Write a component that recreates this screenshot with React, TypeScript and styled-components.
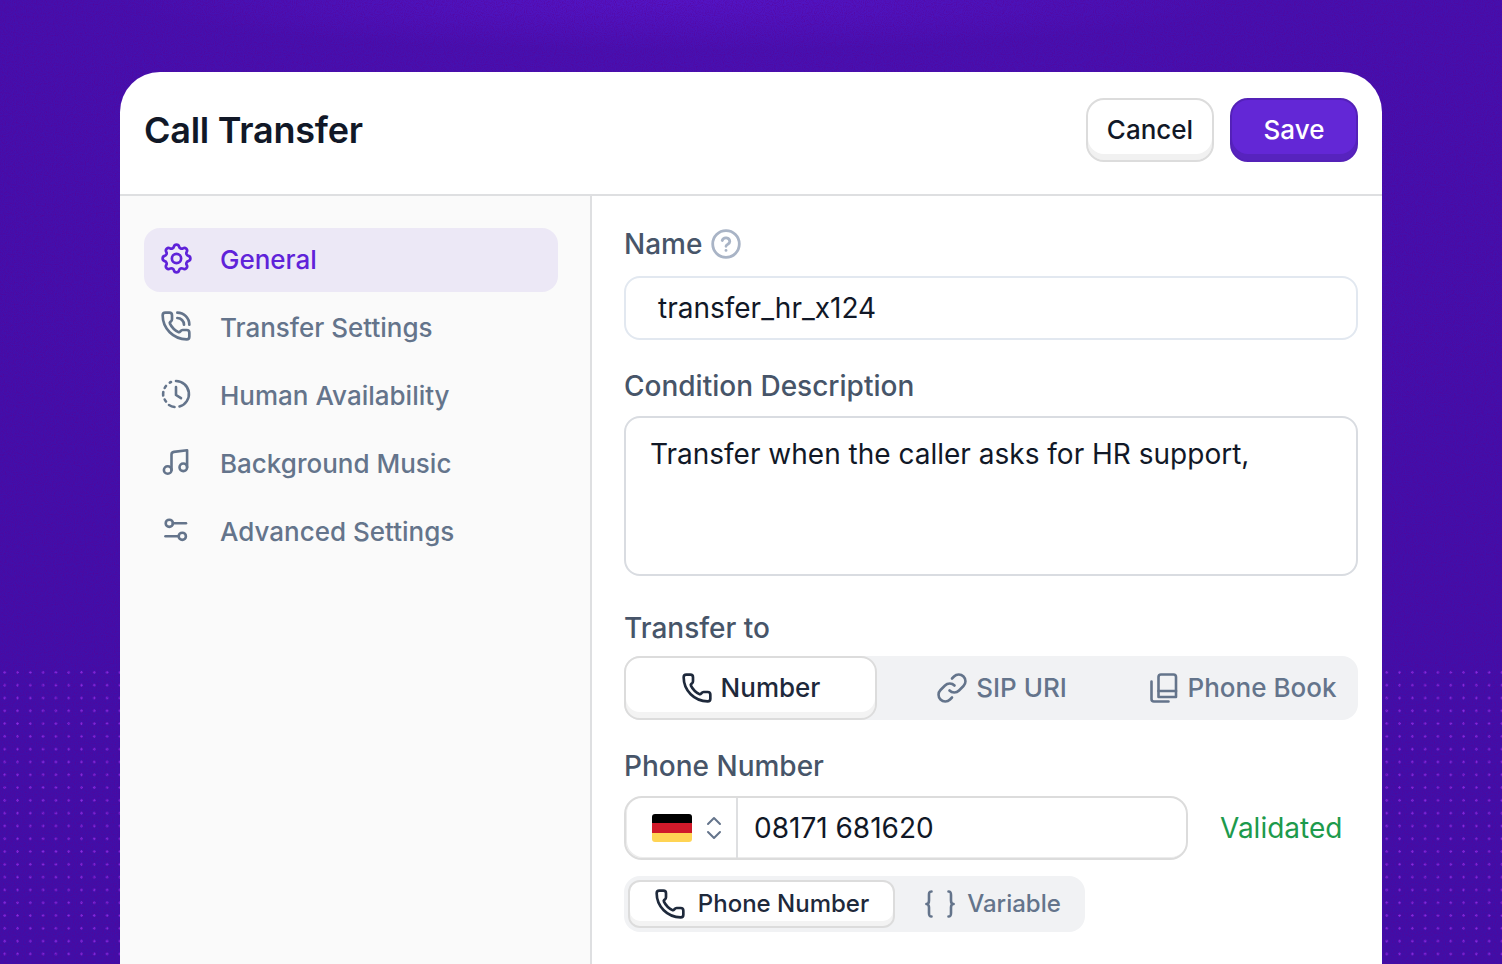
import { FC, ReactNode } from "react";
import styled, { createGlobalStyle } from "styled-components";
import { Phone, PhoneCall } from "lucide-react";
import { TbSettings } from "react-icons/tb";

const GlobalStyle = createGlobalStyle`
  html, body {
    margin: 0;
    padding: 0;
    overflow: hidden;
  }
  * {
    box-sizing: border-box;
  }
  body {
    font-family: "Inter", "Liberation Sans", sans-serif;
  }
`;

const ClockDashed = () => (
  <svg width="32" height="32" viewBox="0 0 32 32" fill="none" stroke="currentColor" strokeWidth="2.6" strokeLinecap="round" strokeLinejoin="round">
    <path d="M16 3a13 13 0 0 1 3.500 25.500" />
    <path d="M14.500 29a13 13 0 0 1-5.500-2" />
    <path d="M6 23.500a13 13 0 0 1-1.300-2" />
    <path d="M3.200 17.500a13 13 0 0 1 .1-3.500" />
    <path d="M4.700 10a13 13 0 0 1 1.300-2" />
    <path d="M9.800 4.600a13 13 0 0 1 1.200-.6" />
    <path d="M16 9v8l5 3.200" />
  </svg>
);

const Music = () => (
  <svg width="32" height="32" viewBox="0 0 32 32" fill="none" stroke="currentColor" strokeWidth="2.6" strokeLinecap="round" strokeLinejoin="round">
    <circle cx="7.700" cy="24" r="3.800" />
    <circle cx="23.300" cy="21.300" r="3.800" />
    <path d="M11.500 24V8.500c0-1.500.8-2.400 2.400-2.600L27.100 4.200v17" />
  </svg>
);

const Sliders = () => (
  <svg width="32" height="32" viewBox="0 0 32 32" fill="none" stroke="currentColor" strokeWidth="2.600" strokeLinecap="round" strokeLinejoin="round">
    <circle cx="9.300" cy="9.300" r="3.600" />
    <path d="M13 9.300h13" />
    <circle cx="22.300" cy="22.300" r="3.600" />
    <path d="M5.500 22.300h13" />
  </svg>
);

const PhoneBook = () => (
  <svg width="32" height="32" viewBox="0 0 32 32" fill="none" stroke="currentColor" strokeWidth="2.600" strokeLinecap="round" strokeLinejoin="round">
    <path d="M3.500 9.500v17.500a2.500 2.500 0 0 0 2.500 2.500h14.500" />
    <path d="M10.500 25V5a2.500 2.500 0 0 1 2.500-2.500h12.500A2.500 2.500 0 0 1 28 5v20Z" />
    <path d="M10.500 19h17.500" />
  </svg>
);

const Braces = () => (
  <svg width="30" height="32" viewBox="0 0 30 32" fill="none" stroke="currentColor" strokeWidth="2.600" strokeLinecap="round" strokeLinejoin="round">
    <path d="M6.500 3.500C4 3.500 4 5 4 7v5.500c0 2-1 3.500-2.600 3.500C3 16 4 17.500 4 19.500V25c0 2 0 3.500 2.500 3.500" />
    <path d="M23.500 3.500C26 3.500 26 5 26 7v5.500c0 2 1 3.500 2.600 3.500-1.600 0-2.600 1.500-2.600 3.500V25c0 2 0 3.500-2.500 3.500" />
  </svg>
);

const HelpIcon = () => (
  <svg width="30" height="30" viewBox="0 0 30 30" fill="none" stroke="currentColor" strokeWidth="2.800" strokeLinecap="round" strokeLinejoin="round">
    <circle cx="15" cy="15" r="13.300" />
    <path d="M11.200 11.500a3.900 3.900 0 0 1 7.600 1c0 2.600-3.800 3-3.800 4.800" />
    <path d="M15 21.300v.1" />
  </svg>
);

const LinkIcon = () => (
  <svg width="32" height="32" viewBox="0 0 32 32" fill="none" stroke="currentColor" strokeWidth="2.600" strokeLinecap="round" strokeLinejoin="round">
    <path d="M13.500 18.500a6.500 6.500 0 0 0 9.500 0l4.500-4.500a6.700 6.700 0 0 0-9.500-9.500l-2 2" />
    <path d="M18.500 13.500a6.500 6.500 0 0 0-9.500 0L4.500 18a6.700 6.700 0 0 0 9.500 9.500l2-2" />
  </svg>
);

const Flag = () => (
  <FlagBox>
    <FlagStripe $color="#000000" />
    <FlagStripe $color="#d01a2a" />
    <FlagStripe $color="#ffd454" />
  </FlagBox>
);

const NAV: { label: string; icon: ReactNode; active?: boolean }[] = [
  { label: "General", icon: <TbSettings size={37} strokeWidth={1.75} />, active: true },
  { label: "Transfer Settings", icon: <PhoneCall size={32} strokeWidth={2} /> },
  { label: "Human Availability", icon: <ClockDashed /> },
  { label: "Background Music", icon: <Music /> },
  { label: "Advanced Settings", icon: <Sliders /> },
];

const App: FC = (): JSX.Element => {
  return (
    <Page>
      <GlobalStyle />
      <Grain aria-hidden="true">
        <filter id="grain">
          <feTurbulence type="fractalNoise" baseFrequency="0.9" numOctaves="2" seed="4" />
          <feColorMatrix values="0 0 0 0 0.1  0 0 0 0 0  0 0 0 0 0.3  0 0 0 1.2 -0.45" />
        </filter>
        <rect width="100%" height="100%" filter="url(#grain)" />
      </Grain>
      <Card>
        <Header>
          <Title>Call Transfer</Title>
          <HeaderActions>
            <CancelButton>Cancel</CancelButton>
            <SaveButton>Save</SaveButton>
          </HeaderActions>
        </Header>
        <Body>
          <Sidebar>
            {NAV.map((item) => (
              <NavItem key={item.label} $active={item.active}>
                <NavIcon>{item.icon}</NavIcon>
                {item.label}
              </NavItem>
            ))}
          </Sidebar>
          <Form>
            <Label $bottom={15}>
              Name
              <HelpWrap>
                <HelpIcon />
              </HelpWrap>
            </Label>
            <NameInput>transfer_hr_x124</NameInput>

            <Label $top={29} $bottom={13}>
              Condition Description
            </Label>
            <TextArea>Transfer when the caller asks for HR support,</TextArea>

            <Label $top={35} $bottom={11}>
              Transfer to
            </Label>
            <Tabs>
              <Tab $active>
                <Phone size={32} strokeWidth={2} />
                Number
              </Tab>
              <Tab>
                <LinkIcon />
                SIP URI
              </Tab>
              <Tab>
                <PhoneBook />
                Phone Book
              </Tab>
            </Tabs>

            <Label $top={29} $bottom={13}>
              Phone Number
            </Label>
            <PhoneRow>
              <PhoneField>
                <CountrySelect>
                  <Flag />
                  <svg width="16" height="24" viewBox="0 0 16 24" fill="none" stroke="#64748b" strokeWidth="2" strokeLinecap="round" strokeLinejoin="round">
                    <path d="M2 8l6-6 6 6" />
                    <path d="M2 16l6 6 6-6" />
                  </svg>
                </CountrySelect>
                <PhoneValue>08171 681620</PhoneValue>
              </PhoneField>
              <Validated>Validated</Validated>
            </PhoneRow>

            <SmallTabs>
              <SmallTab $active>
                <Phone size={32} strokeWidth={2} />
                Phone Number
              </SmallTab>
              <SmallTab>
                <Braces />
                Variable
              </SmallTab>
            </SmallTabs>
          </Form>
        </Body>
      </Card>
    </Page>
  );
};

export default App;

const Page = styled.div`
  position: relative;
  width: 1502px;
  height: 964px;
  padding: 72px 120px 0;
  overflow: hidden;
  display: flex;
  background:
    radial-gradient(ellipse 560px 50px at 680px 0px, #5315c6 0%, rgba(83, 21, 198, 0) 100%),
    radial-gradient(ellipse 900px 500px at 750px 100px, #4711b2 0%, rgba(71, 17, 178, 0) 100%),
    linear-gradient(180deg, #4310ad 0%, #3f0fa8 100%);

  &::before {
    content: "";
    position: absolute;
    left: 0;
    right: 0;
    top: 665.6px;
    bottom: 0;
    background-image: radial-gradient(circle at center, #8a2be2 0, #8a2be2 0.9px, rgba(138, 43, 226, 0) 1.5px);
    background-size: 12.8px 12.8px;
    background-position: -1.7px 0;
  }
`;

const Grain = styled.svg`
  position: absolute;
  inset: 0;
  width: 100%;
  height: 100%;
`;

const Card = styled.div`
  position: relative;
  flex: 1;
  background: #ffffff;
  border-radius: 40px 40px 0 0;
  overflow: hidden;
  display: flex;
  flex-direction: column;
`;

const Header = styled.div`
  height: 124px;
  padding: 26px 24px 32px;
  border-bottom: 2px solid #dedfe1;
  display: flex;
  align-items: center;
  justify-content: space-between;
  flex-shrink: 0;
`;

const Title = styled.div`
  font-size: 36px;
  font-weight: 600;
  color: #111827;
  letter-spacing: -0.25px;
`;

const HeaderActions = styled.div`
  display: flex;
  gap: 16px;
`;

const CancelButton = styled.button`
  width: 128px;
  height: 64px;
  border: 2px solid #dcdcdc;
  border-radius: 18px;
  background: #ffffff;
  box-shadow: inset 0 -6px 0 #f1f1f1;
  font: 500 26px "Inter", sans-serif;
  color: #111827;
  padding: 0 0 2px;
`;

const SaveButton = styled.button`
  width: 128px;
  height: 64px;
  border: 2px solid #5421b8;
  border-radius: 18px;
  background: #6327d6;
  box-shadow: inset 0 -6px 0 #5723be;
  font: 500 26px "Inter", sans-serif;
  color: #ffffff;
  padding: 0 0 2px;
`;

const Body = styled.div`
  flex: 1;
  display: flex;
  min-height: 0;
`;

const Sidebar = styled.div`
  width: 472px;
  flex-shrink: 0;
  padding: 32px 32px 0 24px;
  background: #fafafa;
  border-right: 2px solid #dedfe1;
  display: flex;
  flex-direction: column;
  gap: 4px;
`;

const NavItem = styled.div<{ $active?: boolean }>`
  height: 64px;
  padding: 0 0 1px 16px;
  border-radius: 16px;
  display: flex;
  align-items: center;
  gap: 28px;
  font-size: 26px;
  font-weight: 500;
  color: ${({ $active }) => ($active ? "#5f22d9" : "#64748b")};
  background: ${({ $active }) => ($active ? "#ece8f6" : "transparent")};
`;

const NavIcon = styled.span`
  width: 32px;
  height: 32px;
  margin-bottom: 3px;
  display: flex;
  align-items: center;
  justify-content: center;
  flex-shrink: 0;

  svg {
    flex-shrink: 0;
  }
`;

const Form = styled.div`
  flex: 1;
  padding: 31px 24px 0 32px;
  display: flex;
  flex-direction: column;
`;

const Label = styled.div<{ $top?: number; $bottom?: number }>`
  height: 34px;
  margin-top: ${({ $top }) => $top ?? 0}px;
  margin-bottom: ${({ $bottom }) => $bottom ?? 0}px;
  display: flex;
  align-items: center;
  gap: 9px;
  font-size: 28px;
  font-weight: 500;
  color: #475569;
`;

const HelpWrap = styled.span`
  display: flex;
  color: #a9b4c6;
`;

const NameInput = styled.div`
  height: 64px;
  padding: 0 32px;
  border: 2px solid #e2e8f0;
  border-radius: 16px;
  display: flex;
  align-items: center;
  font-size: 28px;
  color: #111827;
`;

const TextArea = styled.div`
  height: 160px;
  padding: 17px 24px;
  border: 2px solid #d9dce1;
  border-radius: 16px;
  font-size: 28px;
  line-height: 38px;
  color: #111827;
`;

const Tabs = styled.div`
  height: 64px;
  border-radius: 16px;
  background: #f1f2f4;
  display: grid;
  grid-template-columns: 253px 249px 1fr;
`;

const Tab = styled.div<{ $active?: boolean }>`
  display: flex;
  align-items: center;
  justify-content: center;
  gap: 8px;
  padding-bottom: 1px;
  font-size: 26px;
  font-weight: 500;
  color: ${({ $active }) => ($active ? "#1e293b" : "#64748b")};
  ${({ $active }) =>
    $active &&
    `
    background: #ffffff;
    border: 2px solid #dcdcdc;
    border-radius: 16px;
    box-shadow: inset 0 -6px 0 #f3f3f3;
  `}
`;

const PhoneRow = styled.div`
  display: flex;
  align-items: center;
  gap: 32px;
`;

const PhoneField = styled.div`
  width: 564px;
  height: 64px;
  border: 2px solid #dcdcdc;
  border-radius: 18px;
  box-shadow: inset 1px -1px 0 #ececec;
  display: flex;
  align-items: stretch;
`;

const CountrySelect = styled.div`
  width: 112px;
  padding-left: 26px;
  border-right: 2px solid #dedfe1;
  display: flex;
  align-items: center;
  gap: 14px;
`;

const FlagBox = styled.div`
  width: 40px;
  height: 28px;
  border-radius: 3px;
  overflow: hidden;
  display: flex;
  flex-direction: column;
`;

const FlagStripe = styled.div<{ $color: string }>`
  flex: 1;
  background: ${({ $color }) => $color};
`;

const PhoneValue = styled.div`
  flex: 1;
  padding-left: 16px;
  display: flex;
  align-items: center;
  font-size: 28px;
  color: #111827;
`;

const Validated = styled.div`
  font-size: 28px;
  font-weight: 400;
  color: #1d9a4c;
`;

const SmallTabs = styled.div`
  width: 461px;
  height: 56px;
  margin-top: 16px;
  padding: 4px;
  border-radius: 16px;
  background: #f1f2f4;
  display: flex;
`;

const SmallTab = styled.div<{ $active?: boolean }>`
  width: ${({ $active }) => ($active ? "267px" : "auto")};
  flex: ${({ $active }) => ($active ? "none" : 1)};
  padding-left: ${({ $active }) => ($active ? 0 : 10)}px;
  padding-bottom: 1px;
  display: flex;
  align-items: center;
  justify-content: center;
  gap: 12px;
  font-size: 24px;
  font-weight: 500;
  color: ${({ $active }) => ($active ? "#1e293b" : "#64748b")};
  ${({ $active }) =>
    $active &&
    `
    background: #ffffff;
    border: 2px solid #dcdcdc;
    border-radius: 12px;
    box-shadow: inset 0 -5px 0 #f3f3f3;
  `}
`;
